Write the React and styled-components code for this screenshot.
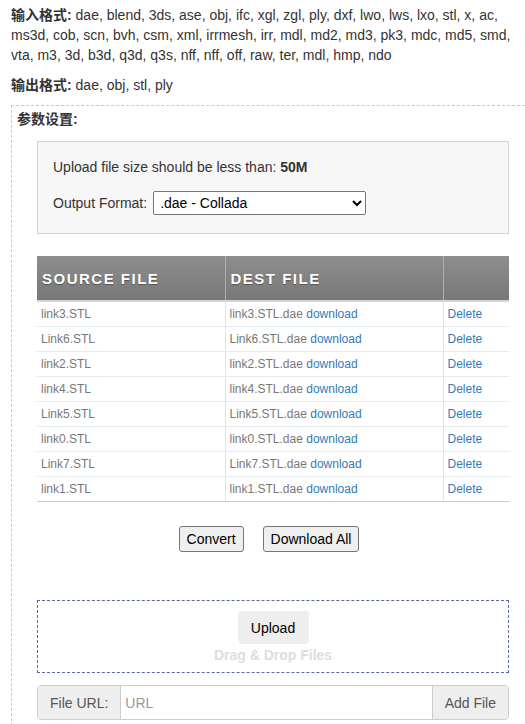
import React from "react";
import styled, { createGlobalStyle } from "styled-components";

const GlobalStyle = createGlobalStyle`
  html, body {
    margin: 0;
    padding: 0;
    background: #fff;
    overflow-x: hidden;
  }
  body {
    font-family: "Liberation Sans", Arial, "Noto Sans CJK SC", sans-serif;
    font-size: 14px;
    color: #333;
  }
`;

const Page = styled.div`
  padding: 5px 0 0 11px;
`;

const Formats = styled.p`
  margin: 0 0 10px;
  line-height: 20px;
  padding-right: 8px;
  b {
    font-family: "Liberation Sans", "Noto Sans CJK SC", sans-serif;
    font-weight: bold;
  }
`;

const Fieldset = styled.div`
  margin-top: 6px;
  border: 1px dashed #c8c8c8;
  border-right: none;
  padding: 4px 16px 20px 5px;
`;

const Legend = styled.div`
  font-family: "Liberation Sans", "Noto Sans CJK SC", sans-serif;
  font-weight: bold;
  font-size: 14px;
  line-height: 18px;
`;

const Body = styled.div`
  padding-left: 20px;
`;

const InfoBox = styled.div`
  margin-top: 13px;
  background: #f7f7f7;
  border: 1px solid #d4d4d4;
  padding: 15px 15px 18px;
  p {
    margin: 0 0 14px;
    line-height: 20px;
  }
`;

const FormatRow = styled.label`
  display: flex;
  align-items: center;
  gap: 6px;
`;

const Select = styled.select`
  width: 213px;
  height: 24px;
  font-family: "Liberation Sans", Arial, sans-serif;
  font-size: 14px;
  color: #000;
  border: 1px solid #767676;
  border-radius: 2px;
  background: #fff;
  padding: 0 2px;
`;

const Table = styled.table`
  margin-top: 22px;
  width: 100%;
  border-collapse: collapse;
  font-size: 12px;
  th {
    height: 44px;
    background: linear-gradient(#8e8e8e, #787878);
    color: #fff;
    text-align: left;
    font-size: 15px;
    font-weight: bold;
    letter-spacing: 1.5px;
    padding: 0 5px;
    border-right: 1px solid #b0b0b0;
    text-shadow: 0 1px 1px rgba(0, 0, 0, 0.35);
    border-bottom: 2px solid #d6d6d6;
  }
  th:last-child {
    border-right: none;
  }
  td {
    height: 24px;
    padding: 0 4px;
    color: #777;
    border-bottom: 1px solid #e1ecf2;
    border-right: 1px solid #dde3e6;
  }
  td:last-child {
    border-right: none;
  }
  tr:last-child td {
    border-bottom: 1px solid #ccc;
  }
`;

const Link = styled.a`
  color: #337ab7;
  text-decoration: none;
`;

const Actions = styled.div`
  display: flex;
  justify-content: center;
  gap: 19px;
  margin: 24px 0 48px;
  padding-right: 8px;
`;

const Button = styled.button`
  font-family: "Liberation Sans", Arial, sans-serif;
  font-size: 14px;
  color: #000;
  background: #efefef;
  border: 1px solid #767676;
  border-radius: 3px;
  height: 26px;
  padding: 0 7px;
`;

const DropZone = styled.div`
  border: 1px dashed #5865a6;
  height: 73px;
  display: flex;
  flex-direction: column;
  align-items: center;
  padding-top: 10px;
  box-sizing: border-box;
`;

const UploadButton = styled.button`
  font-family: "Liberation Sans", Arial, sans-serif;
  font-size: 14px;
  color: #000;
  background: #eee;
  border: none;
  border-radius: 4px;
  width: 71px;
  height: 33px;
`;

const DropHint = styled.div`
  font-weight: bold;
  color: #dcdde3;
  font-size: 14px;
  margin-top: 3px;
`;

const UrlGroup = styled.div`
  margin-top: 12px;
  display: flex;
  height: 33px;
  border: 1px solid #ccc;
  border-radius: 4px;
  overflow: hidden;
`;

const Addon = styled.span`
  display: flex;
  align-items: center;
  padding: 0 12px;
  background: #eee;
  color: #555;
  border-right: ${(p) => (p.$left ? "1px solid #ccc" : "none")};
  border-left: ${(p) => (p.$left ? "none" : "1px solid #ccc")};
`;

const UrlInput = styled.input`
  flex: 1;
  border: none;
  outline: none;
  font-family: "Liberation Sans", Arial, sans-serif;
  font-size: 14px;
  padding: 0 4px;
  &::placeholder {
    color: #999;
  }
`;

const rows = ["link3", "Link6", "link2", "link4", "Link5", "link0", "Link7", "link1"];

const App = () => (
  <Page>
    <GlobalStyle />
    <Formats>
      <b>输入格式:</b> dae, blend, 3ds, ase, obj, ifc, xgl, zgl, ply, dxf, lwo, lws, lxo, stl, x, ac,
      ms3d, cob, scn, bvh, csm, xml, irrmesh, irr, mdl, md2, md3, pk3, mdc, md5, smd,
      vta, m3, 3d, b3d, q3d, q3s, nff, nff, off, raw, ter, mdl, hmp, ndo
    </Formats>
    <Formats>
      <b>输出格式:</b> dae, obj, stl, ply
    </Formats>
    <Fieldset>
      <Legend>参数设置:</Legend>
      <Body>
        <InfoBox>
          <p>
            Upload file size should be less than: <b>50M</b>
          </p>
          <FormatRow>
            Output Format:
            <Select defaultValue="dae">
              <option value="dae">.dae - Collada</option>
              <option value="obj">.obj - Wavefront</option>
              <option value="stl">.stl - Stereolithography</option>
              <option value="ply">.ply - Polygon</option>
            </Select>
          </FormatRow>
        </InfoBox>
        <Table>
          <colgroup>
            <col style={{ width: 188 }} />
            <col style={{ width: 218 }} />
            <col />
          </colgroup>
          <thead>
            <tr>
              <th>SOURCE FILE</th>
              <th>DEST FILE</th>
              <th></th>
            </tr>
          </thead>
          <tbody>
            {rows.map((name) => (
              <tr key={name}>
                <td>{name}.STL</td>
                <td>
                  {name}.STL.dae <Link href="#">download</Link>
                </td>
                <td>
                  <Link href="#">Delete</Link>
                </td>
              </tr>
            ))}
          </tbody>
        </Table>
        <Actions>
          <Button>Convert</Button>
          <Button>Download All</Button>
        </Actions>
        <DropZone>
          <UploadButton>Upload</UploadButton>
          <DropHint>Drag &amp; Drop Files</DropHint>
        </DropZone>
        <UrlGroup>
          <Addon $left>File URL:</Addon>
          <UrlInput placeholder="URL" />
          <Addon>Add File</Addon>
        </UrlGroup>
      </Body>
    </Fieldset>
  </Page>
);

export default App;
